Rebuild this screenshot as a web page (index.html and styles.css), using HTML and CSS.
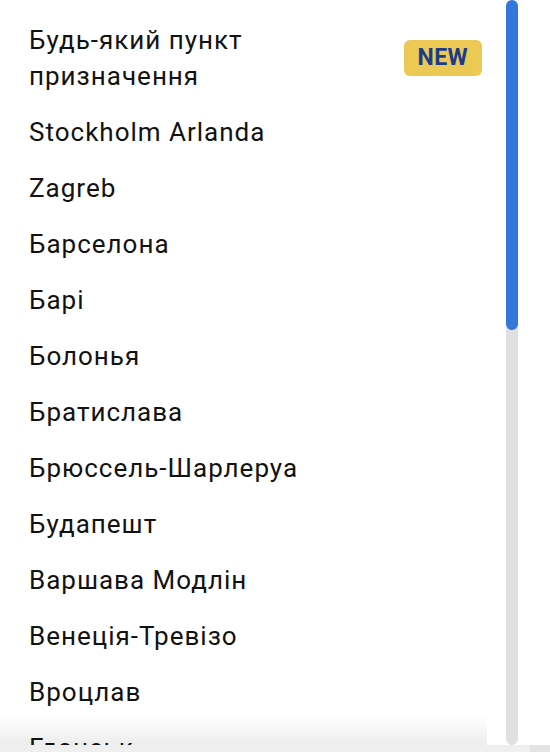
FILE: index.html
```html
<!DOCTYPE html>
<html lang="uk">
<head>
<meta charset="utf-8">
<link rel="stylesheet" href="styles.css">
</head>
<body>
<div class="page">
  <div class="viewport">
    <ul class="list">
      <li class="item item-first"><span class="label">Будь-який пункт<br>призначення</span><span class="badge">NEW</span></li>
      <li class="item">Stockholm Arlanda</li>
      <li class="item">Zagreb</li>
      <li class="item">Барселона</li>
      <li class="item">Барі</li>
      <li class="item">Болонья</li>
      <li class="item">Братислава</li>
      <li class="item">Брюссель-Шарлеруа</li>
      <li class="item">Будапешт</li>
      <li class="item">Варшава Модлін</li>
      <li class="item">Венеція-Тревізо</li>
      <li class="item">Вроцлав</li>
      <li class="item">Гданськ</li>
    </ul>
    <div class="scrollbar"><div class="thumb"></div></div>
    <div class="fade"></div>
  </div>
  <div class="bottom"><div class="bottom-right"></div></div>
</div>
</body>
</html>
```
FILE: styles.css
```css
* { box-sizing: border-box; }
html, body { margin: 0; padding: 0; background: #fff; }
body { font-family: Roboto, "Noto Sans", sans-serif; color: #121212; }
.page { width: 550px; height: 752px; display: flex; flex-direction: column; overflow: hidden; }
.viewport { position: relative; height: 745px; display: flex; overflow: hidden; }
.list { list-style: none; margin: 0; padding: 12px 24px 0 29px; width: 506px; flex: none; }
.item { font-size: 26px; letter-spacing: 1px; line-height: 36px; padding: 10px 0; white-space: nowrap; }
.item-first { display: flex; justify-content: space-between; align-items: center; }
.badge { background: #ecc955; color: #1b3c8c; font-weight: 700; font-size: 23px; letter-spacing: 0.4px; line-height: 36px; height: 36px; padding: 0 14px; border-radius: 6px; }
.scrollbar { width: 12px; flex: none; background: #e0e0e3; border-radius: 6px; height: 745px; display: flex; flex-direction: column; }
.thumb { height: 330px; background: #3479d9; border-radius: 6px; }
.fade { position: absolute; left: 0; top: 716px; width: 487px; height: 29px; background: linear-gradient(to bottom, rgba(0,0,0,0), rgba(0,0,0,0.075)); pointer-events: none; }
.bottom { height: 7px; background: #efefef; display: flex; justify-content: flex-end; }
.bottom-right { width: 20px; background: #e4e4e4; }
```
